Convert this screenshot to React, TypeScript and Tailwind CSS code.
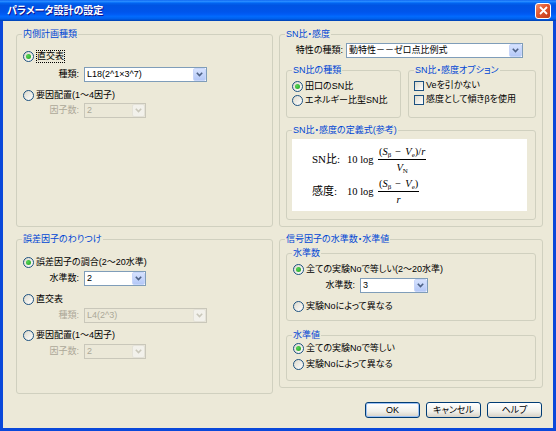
import type { ReactNode } from 'react';

const ui = "font-['Liberation_Sans','Noto_Sans_CJK_JP',sans-serif] [font-feature-settings:'palt']";

function GroupBox({ title, className, children }: { title: string; className: string; children: ReactNode }) {
  return (
    <fieldset className={`m-0 rounded-[3px] border border-[#D0D0BF] p-0 ${className}`}>
      <legend className="ml-[5px] px-[1px] leading-[12px] text-[#0046D5]">{title}</legend>
      {children}
    </fieldset>
  );
}

function Radio({ label, checked, focus, className = '' }: { label: string; checked?: boolean; focus?: boolean; className?: string }) {
  return (
    <div className={`flex h-[12px] items-center ${className}`}>
      <span className="flex size-[11px] shrink-0 items-center justify-center rounded-full border border-[#1C5180] bg-[linear-gradient(135deg,#DCD9CB,#FFFFFF)]">
        {checked && <span className="size-[5px] rounded-full bg-[radial-gradient(circle_at_35%_35%,#55D455,#21A121)]" />}
      </span>
      <span className={`ml-[2px] whitespace-nowrap leading-[11px] ${focus ? 'ml-[3px] outline-1 outline-dotted outline-black' : ''}`}>{label}</span>
    </div>
  );
}

function Check({ label, className = '' }: { label: string; className?: string }) {
  return (
    <div className={`flex h-[12px] items-center ${className}`}>
      <span className="size-[10px] shrink-0 border border-[#1C5180] bg-[linear-gradient(135deg,#DCD9CB,#FFFFFF)]" />
      <span className="ml-[2px] whitespace-nowrap">{label}</span>
    </div>
  );
}

function Combo({ value, className, disabled }: { value: string; className: string; disabled?: boolean }) {
  return (
    <div
      className={`flex h-[15px] items-center border ${
        disabled ? 'border-[#C9C7BA] bg-[#EBE8D8] text-[#ACA899]' : 'border-[#7F9DB9] bg-white text-black'
      } ${className}`}
    >
      <span className="flex-1 truncate pl-[2px] leading-[13px]">{value}</span>
      <span
        className={`flex h-[13px] w-[13px] items-center justify-center rounded-[2px] border ${
          disabled ? 'border-[#E4E2D8] bg-[#F2F1EB]' : 'border-[#C8D6FA] bg-[linear-gradient(#D6E2FE,#B4C8F7)]'
        }`}
      >
        <svg width="7" height="5" viewBox="0 0 7 5">
          <path d="M0.8 0.8 L3.5 3.6 L6.2 0.8" fill="none" stroke={disabled ? '#C9C7BA' : '#4D6185'} strokeWidth="1.6" />
        </svg>
      </span>
    </div>
  );
}

function Field({ label, value, labelClass, comboClass, disabled, className = '' }: {
  label: string; value: string; labelClass: string; comboClass: string; disabled?: boolean; className?: string;
}) {
  return (
    <div className={`flex items-center ${className}`}>
      <span className={`whitespace-nowrap text-right ${disabled ? 'text-[#ACA899]' : ''} ${labelClass}`}>{label}</span>
      <Combo value={value} className={comboClass} disabled={disabled} />
    </div>
  );
}

function XpButton({ label, primary }: { label: string; primary?: boolean }) {
  return (
    <button
      className={`flex h-[16px] w-[55px] items-center justify-center rounded-[3px] border border-[#003C74] bg-[linear-gradient(#FFFFFF,#F0F0EA_60%,#D8D2C6)] leading-[12px] ${
        primary ? 'shadow-[inset_0_0_0_1px_#9CC1F5]' : ''
      }`}
    >
      {label}
    </button>
  );
}

function Frac({ num, den }: { num: ReactNode; den: ReactNode }) {
  return (
    <span className="inline-flex flex-col items-center whitespace-nowrap leading-[13px]">
      <span className="px-[1px] pb-[1px]">{num}</span>
      <span className="w-full border-t border-black" />
      <span className="pt-[1px]">{den}</span>
    </span>
  );
}

function Formula() {
  const nume = (
    <>
      (<i>S</i>
      <sub className="text-[7px]">β</sub>
      <span className="mx-[4px]">−</span>
      <i>V</i>
      <sub className="text-[7px]">e</sub>)
    </>
  );
  return (
    <div className="ml-[5px] mt-[3px] h-[72px] w-[235px] bg-white pl-[20px] pt-[6px] font-['Liberation_Serif','Noto_Sans_CJK_JP',serif] text-[10.5px] text-black">
      <div className="flex items-center">
        <span className="w-[35px] shrink-0 whitespace-nowrap text-[11px]">SN比:</span>
        <span className="w-[31px] shrink-0 whitespace-nowrap">10 log</span>
        <Frac num={<>{nume}/<i>r</i></>} den={<><i>V</i><sub className="text-[7px]">N</sub></>} />
      </div>
      <div className="mt-[3px] flex items-center">
        <span className="w-[35px] shrink-0 whitespace-nowrap text-[11px]">感度:</span>
        <span className="w-[31px] shrink-0 whitespace-nowrap">10 log</span>
        <Frac num={nume} den={<i>r</i>} />
      </div>
    </div>
  );
}

export default function App() {
  return (
    <div className={`flex h-[431px] w-[556px] flex-col bg-[#0A48DA] text-[9px] text-black ${ui}`}>
      <div className="flex h-[21px] shrink-0 items-center justify-between bg-[linear-gradient(#0058EE_0%,#3593FF_5%,#127DFF_10%,#0262EE_16%,#0054E3_26%,#0055EB_56%,#005BF5_68%,#026AFE_78%,#0062EF_88%,#0052D6_94%,#0040AB_100%)] pl-[7px] pr-[5px]">
        <span className="text-[10px] font-bold text-white [text-shadow:1px_1px_#0F1089]">パラメータ設計の設定</span>
        <span className="flex size-[16px] items-center justify-center rounded-[3px] border border-white bg-[linear-gradient(135deg,#F08E6E,#E0552E_45%,#C13A18)]">
          <svg width="9" height="9" viewBox="0 0 9 9">
            <path d="M1 1 L8 8 M8 1 L1 8" stroke="white" strokeWidth="1.8" />
          </svg>
        </span>
      </div>

      <div className="mx-[3px] mb-[3px] flex flex-1 flex-col bg-[#ECE9D8] pl-[13px] pr-[11px] pt-[7px]">
        <div className="grid grid-cols-[257px_264px] grid-rows-[199px_161px] gap-x-[6px] gap-y-[6px]">
          <GroupBox title="内側計画種類" className="h-[199px]">
            <div className="pl-[6px]">
              <Radio label="直交表" checked focus className="mt-[10px]" />
              <Field label="種類:" value="L18(2^1×3^7)" labelClass="w-[61px] pr-[5px]" comboClass="w-[123px]" className="mt-[5px]" />
              <Radio label="要因配置(1〜4因子)" className="mt-[7px]" />
              <Field label="因子数:" value="2" labelClass="w-[61px] pr-[5px]" comboClass="w-[62px]" disabled className="mt-[2px]" />
            </div>
          </GroupBox>

          <GroupBox title="SN比・感度" className="h-[199px]">
            <Field label="特性の種類:" value="動特性－－ゼロ点比例式" labelClass="w-[66px] pr-[3px]" comboClass="w-[177px]" className="mt-[3px]" />
            <div className="mt-[6px] flex gap-[7px] pl-[6px]">
              <GroupBox title="SN比の種類" className="h-[54px] w-[115px]">
                <div className="pl-[5px]">
                  <Radio label="田口のSN比" checked className="mt-[4px]" />
                  <Radio label="エネルギー比型SN比" className="mt-[2px]" />
                </div>
              </GroupBox>
              <GroupBox title="SN比・感度オプション" className="h-[54px] w-[128px]">
                <div className="pl-[5px]">
                  <Check label="Veを引かない" className="mt-[4px]" />
                  <Check label="感度として傾きβを使用" className="mt-[2px]" />
                </div>
              </GroupBox>
            </div>
            <div className="mt-[6px] pl-[6px]">
              <GroupBox title="SN比・感度の定義式(参考)" className="h-[96px] w-[250px]">
                <Formula />
              </GroupBox>
            </div>
          </GroupBox>

          <GroupBox title="誤差因子のわりつけ" className="h-[161px]">
            <div className="pl-[6px]">
              <Radio label="誤差因子の調合(2〜20水準)" checked className="mt-[11px]" />
              <Field label="水準数:" value="2" labelClass="w-[61px] pr-[5px]" comboClass="w-[62px]" className="mt-[3px]" />
              <Radio label="直交表" className="mt-[7px]" />
              <Field label="種類:" value="L4(2^3)" labelClass="w-[61px] pr-[5px]" comboClass="w-[123px]" disabled className="mt-[3px]" />
              <Radio label="要因配置(1〜4因子)" className="mt-[6px]" />
              <Field label="因子数:" value="2" labelClass="w-[61px] pr-[5px]" comboClass="w-[62px]" disabled className="mt-[3px]" />
            </div>
          </GroupBox>

          <GroupBox title="信号因子の水準数・水準値" className="h-[155px] self-start">
            <div className="pl-[6px]">
              <GroupBox title="水準数" className="mt-[2px] h-[74px] w-[250px]">
                <div className="pl-[6px]">
                  <Radio label="全ての実験Noで等しい(2〜20水準)" checked className="mt-[4px]" />
                </div>
                <Field label="水準数:" value="3" labelClass="w-[73px] pr-[5px]" comboClass="w-[68px]" className="mt-[3px]" />
                <div className="pl-[6px]">
                  <Radio label="実験Noによって異なる" className="mt-[7px]" />
                </div>
              </GroupBox>
              <GroupBox title="水準値" className="mt-[8px] h-[52px] w-[250px]">
                <div className="pl-[6px]">
                  <Radio label="全ての実験Noで等しい" checked className="mt-[1px]" />
                  <Radio label="実験Noによって異なる" className="mt-[4px]" />
                </div>
              </GroupBox>
            </div>
          </GroupBox>
        </div>

        <div className="mt-[8px] flex justify-end gap-[6px]">
          <XpButton label="OK" primary />
          <XpButton label="キャンセル" />
          <XpButton label="ヘルプ" />
        </div>
      </div>
    </div>
  );
}
